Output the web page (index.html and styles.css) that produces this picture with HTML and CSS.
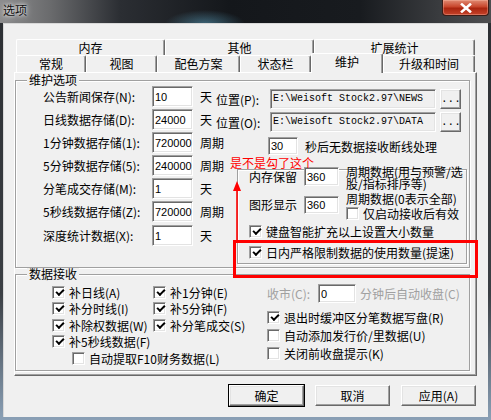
FILE: index.html
```html
<!DOCTYPE html>
<html lang="zh-CN">
<head>
  <meta charset="UTF-8" />
  <title>选项</title>
  <link rel="stylesheet" href="styles.css">
</head>
<body>
  <div class="window">
    <div class="titlebar">
      <span class="title">选项</span>
      <button class="close-btn" aria-label="关闭">
        <svg width="16" height="10" viewBox="0 0 16 10"><path d="M4 1.5 L12 8.5 M12 1.5 L4 8.5" stroke="#fff" stroke-width="2.6" stroke-linecap="square"/></svg>
      </button>
    </div>

    <div class="client">
      <div class="tabs">
        <div class="tab-row back">
          <div class="tab">内存</div>
          <div class="tab">其他</div>
          <div class="tab">扩展统计</div>
        </div>
        <div class="tab-row front">
          <div class="tab">常规</div>
          <div class="tab">视图</div>
          <div class="tab">配色方案</div>
          <div class="tab">状态栏</div>
          <div class="tab active">维护</div>
          <div class="tab">升级和时间</div>
        </div>
      </div>

      <div class="panel">
        <fieldset class="group maint">
          <legend>维护选项</legend>
          <div class="maint-body">
            <div class="left-col">
              <div class="field"><label>公告新闻保存(N):</label><input class="num" value="10"><span class="unit">天</span></div>
              <div class="field"><label>日线数据存储(D):</label><input class="num" value="24000"><span class="unit">天</span></div>
              <div class="field"><label>1分钟数据存储(1):</label><input class="num" value="720000"><span class="unit">周期</span></div>
              <div class="field"><label>5分钟数据存储(5):</label><input class="num" value="240000"><span class="unit">周期</span></div>
              <div class="field"><label>分笔成交存储(M):</label><input class="num" value="1"><span class="unit">天</span></div>
              <div class="field"><label>5秒线数据存储(Z):</label><input class="num" value="720000"><span class="unit">周期</span></div>
              <div class="field last"><label>深度统计数据(X):</label><input class="num" value="1"><span class="unit">天</span></div>
            </div>
            <div class="right-col">
              <div class="path-row"><span class="path-label">位置(P):</span><div class="path">E:\Weisoft Stock2.97\NEWS</div><button class="btn dots">...</button></div>
              <div class="path-row"><span class="path-label">位置(O):</span><div class="path">E:\Weisoft Stock2.97\DATA</div><button class="btn dots">...</button></div>
              <div class="timeout-row"><input class="num short" value="30"><span>秒后无数据接收断线处理</span></div>
              <div class="mem-box">
                <div class="mem-row first">
                  <span class="mem-label">内存保留</span><input class="num mem" value="360">
                  <span class="mem-desc">周期数据(用与预警/选<br>股/指标排序等)</span>
                </div>
                <div class="mem-row second">
                  <span class="mem-label">图形显示</span><input class="num mem" value="360">
                  <div class="mem-desc">
                    <div>周期数据(0表示全部)</div>
                    <div class="check sub"><span class="cb"></span>仅启动接收后有效</div>
                  </div>
                </div>
                <div class="check wide"><span class="cb on"></span>键盘智能扩充以上设置大小数量</div>
                <div class="check wide limit"><span class="cb on"></span>日内严格限制数据的使用数量(提速)</div>
              </div>
            </div>
          </div>
        </fieldset>

        <fieldset class="group recv">
          <legend>数据接收</legend>
          <div class="recv-body">
            <div class="recv-grid">
              <div class="check"><span class="cb on"></span>补日线(A)</div>
              <div class="check"><span class="cb on"></span>补1分钟(E)</div>
              <div class="check"><span class="cb on"></span>补分时线(I)</div>
              <div class="check"><span class="cb on"></span>补5分钟(F)</div>
              <div class="check"><span class="cb on"></span>补除权数据(W)</div>
              <div class="check"><span class="cb on"></span>补分笔成交(S)</div>
              <div class="check span"><span class="cb on"></span>补5秒线数据(F)</div>
              <div class="check span indent"><span class="cb"></span>自动提取F10财务数据(L)</div>
            </div>
            <div class="recv-right">
              <div class="close-row"><span class="muted close-label">收市(C):</span><input class="num close-in" value="0"><span class="muted">分钟后自动收盘(C)</span></div>
              <div class="check tall"><span class="cb on"></span>退出时缓冲区分笔数据写盘(R)</div>
              <div class="check tall"><span class="cb"></span>自动添加发行价/里数据(U)</div>
              <div class="check tall"><span class="cb"></span>关闭前收盘提示(K)</div>
            </div>
          </div>
        </fieldset>

        <span class="note">是不是勾了这个</span>
        <svg class="arrow" width="10" height="60" viewBox="0 0 10 60">
          <polygon points="5,0 1,10 9,10" fill="#f00"/>
          <line x1="5" y1="9" x2="5" y2="60" stroke="#f00" stroke-width="1.6"/>
        </svg>
        <div class="mark"></div>
      </div>

      <div class="buttons">
        <button class="btn action default">确定</button>
        <button class="btn action">取消</button>
        <button class="btn action">应用(A)</button>
      </div>
    </div>
  </div>
</body>
</html>
```

FILE: styles.css
```css
* {
  box-sizing: border-box;
}
html, body {
  margin: 0;
  padding: 0;
}
body {
  width: 491px;
  height: 420px;
  overflow: hidden;
  font-family: "Noto Sans CJK SC", "Noto Sans", sans-serif;
  font-size: 12px;
  color: #000;
  background: #1d2024;
}
.window {
  width: 491px;
  height: 420px;
  display: flex;
  flex-direction: column;
  background: linear-gradient(180deg, #2b2e32 0, #3b3f44 70%, #8aa0b6 100%);
}

/* title bar */
.titlebar {
  height: 23px;
  flex: none;
  display: flex;
  align-items: flex-start;
  background:
    radial-gradient(ellipse 40px 14px at 205px 24px, rgba(90, 160, 190, 0.55), transparent),
    linear-gradient(90deg, #8d8d8e 0, #6a6b6d 50px, #2b2e33 120px, #14171b 230px, #181b1f 360px, #3a3c3f 440px, #4d4e50 491px);
}
.title {
  padding-left: 3px;
  line-height: 19px;
  font-size: 12px;
  color: #111;
  text-shadow: 0 0 6px rgba(255, 255, 255, 0.9), 0 0 3px rgba(255, 255, 255, 0.8);
}
.close-btn {
  margin-left: auto;
  margin-right: 2px;
  width: 47px;
  height: 16px;
  padding: 0;
  border: 1px solid #3b1c16;
  border-top: none;
  border-radius: 0 0 4px 4px;
  background: linear-gradient(180deg, #e08a72 0, #c8462c 45%, #a9250f 55%, #c5432a 100%);
  box-shadow: inset 0 0 0 1px rgba(255, 200, 180, 0.35);
  display: flex;
  align-items: center;
  justify-content: center;
}
.close-btn svg {
  display: block;
}

/* client area */
.client {
  flex: 1;
  margin: 0 3px 3px;
  background: #f0f0f0;
  padding: 16px 0 0 11px;
  box-shadow: inset 1px 1px 0 #d8d8d8;
}

/* tabs */
.tabs {
  margin-left: 2px;
  width: 459px;
}
.tab-row {
  display: flex;
}
.tab-row.back {
  height: 16px;
}
.tab-row.front {
  height: 17px;
}
.tab {
  text-align: center;
  border-top: 1px solid #fff;
  border-left: 1px solid #fff;
  border-right: 1px solid #696969;
  box-shadow: inset -1px 0 0 #a0a0a0;
  background: #f0f0f0;
  border-radius: 2px 2px 0 0;
}
.back .tab {
  line-height: 15px;
}
.front .tab {
  line-height: 16px;
}
.back .tab:nth-child(1) { width: 149px; }
.back .tab:nth-child(2) { width: 149px; }
.back .tab:nth-child(3) { width: 161px; }
.front .tab:nth-child(1) { width: 70px; }
.front .tab:nth-child(2) { width: 71px; }
.front .tab:nth-child(3) { width: 83px; }
.front .tab:nth-child(4) { width: 71px; }
.front .tab:nth-child(5) { width: 72px; }
.front .tab:nth-child(6) { width: 92px; }
.front .tab.active {
  position: relative;
  z-index: 2;
  height: 20px;
  margin-top: -2px;
  line-height: 16px;
}

/* panel */
.panel {
  position: relative;
  width: 463px;
  height: 304px;
  border: 1px solid;
  border-color: #fff #696969 #696969 #fff;
  box-shadow: inset -1px -1px 0 #a0a0a0;
}

.group {
  margin: 0;
  padding: 0;
  min-width: 0;
  border: 1px solid #a0a0a0;
  box-shadow: inset 1px 1px 0 #fff, 1px 1px 0 #fff;
}
.group legend {
  margin-left: 11px;
  padding: 0 2px;
  line-height: 12px;
  background: #f0f0f0;
}
.maint {
  width: 455px;
  margin-top: 1px;
}
.maint-body {
  display: flex;
  padding: 0 0 3px 27px;
}
.left-col {
  flex: none;
  width: 173px;
}
.field {
  display: flex;
  align-items: center;
  height: 21px;
  margin-bottom: 2px;
  white-space: nowrap;
}
.field > * {
  flex: none;
}
.field.last {
  margin-top: 3px;
}
.field label {
  width: 109px;
}
.unit {
  margin-left: 7px;
}

.num {
  width: 41px;
  height: 21px;
  padding: 0 0 0 2px;
  font-family: "Liberation Sans", sans-serif;
  font-size: 11px;
  color: #000;
  background: #fff;
  border: 1px solid;
  border-color: #a0a0a0 #fff #fff #a0a0a0;
  box-shadow: inset 1px 1px 0 #696969, inset -1px -1px 0 #e3e3e3;
  outline: none;
}

.right-col {
  flex: 1;
}
.path-row {
  display: flex;
  align-items: center;
  height: 20px;
  margin-top: 3px;
}
.path-label {
  width: 54px;
}
.path {
  width: 166px;
  height: 20px;
  padding-left: 2px;
  font-family: "Liberation Mono", monospace;
  font-size: 10px;
  line-height: 18px;
  white-space: nowrap;
  border: 1px solid;
  border-color: #a0a0a0 #fff #fff #a0a0a0;
  box-shadow: inset 1px 1px 0 #696969, inset -1px -1px 0 #e3e3e3;
}
.btn {
  padding: 0;
  font-family: inherit;
  font-size: 12px;
  color: #000;
  background: #f0f0f0;
  border: 1px solid;
  border-color: #fff #696969 #696969 #fff;
  box-shadow: inset -1px -1px 0 #a0a0a0, inset 1px 1px 0 #e3e3e3;
}
.dots {
  width: 21px;
  height: 20px;
  margin-left: 4px;
  font-family: "Liberation Mono", monospace;
  font-size: 11px;
  line-height: 18px;
}
.timeout-row {
  display: flex;
  align-items: center;
  margin-top: 5px;
  padding-left: 52px;
}
.num.short {
  width: 30px;
  height: 18px;
}
.timeout-row span {
  margin-left: 7px;
}

.mem-box {
  width: 230px;
  height: 95px;
  margin: 14px 0 0 21px;
  padding: 0 0 0 11px;
  border: 1px solid #a0a0a0;
  box-shadow: inset 1px 1px 0 #fff, 1px 1px 0 #fff;
}
.mem-row {
  display: flex;
  align-items: flex-start;
}
.mem-row.first {
  margin-top: -3px;
}
.mem-row.second {
  margin-top: 6px;
}
.mem-label {
  width: 55px;
  line-height: 19px;
}
.num.mem {
  width: 35px;
  height: 19px;
}
.second .mem-label {
  line-height: 18px;
}
.second .num.mem {
  height: 18px;
}
.mem-desc {
  margin-left: 7px;
  margin-top: -1px;
  line-height: 12px;
  white-space: nowrap;
}
.second .mem-desc {
  margin-top: -3px;
}

.check {
  display: flex;
  align-items: center;
  white-space: nowrap;
}
.cb {
  position: relative;
  flex: none;
  width: 13px;
  height: 13px;
  margin-right: 4px;
  background: #fff;
  border: 1px solid;
  border-color: #a0a0a0 #fff #fff #a0a0a0;
  box-shadow: inset 1px 1px 0 #696969, inset -1px -1px 0 #e3e3e3;
}
.cb.on::after {
  content: "";
  position: absolute;
  left: 3px;
  top: 2px;
  width: 6px;
  height: 3px;
  border-left: 2px solid #000;
  border-bottom: 2px solid #000;
  transform: rotate(-45deg);
}
.check.sub {
  margin-top: 2px;
  height: 13px;
}
.check.wide {
  height: 14px;
  margin-top: 4px;
}
.check.wide.limit {
  margin-top: 7px;
}

/* data receiving */
.recv {
  width: 455px;
  height: 103px;
}
.recv-body {
  display: flex;
  padding: 4px 0 0 36px;
}
.recv-grid {
  flex: none;
  width: 215px;
  display: grid;
  grid-template-columns: 101px auto;
  grid-auto-rows: 16.5px;
}
.recv-grid .span {
  grid-column: 1 / 3;
}
.recv-grid .indent {
  padding-left: 20px;
}
.recv-right {
  flex: 1;
}
.close-row {
  display: flex;
  align-items: center;
  height: 19px;
  white-space: nowrap;
}
.muted {
  color: #a0a0a0;
}
.close-label {
  width: 51px;
}
.num.close-in {
  width: 38px;
  height: 19px;
  margin-right: 4px;
}
.check.tall {
  height: 18px;
}
.close-row + .check.tall {
  margin-top: 5px;
}

/* annotation drawn over the screenshot */
.note {
  position: absolute;
  left: 215px;
  top: 84px;
  line-height: 12px;
  color: #f00;
  white-space: nowrap;
}
.arrow {
  position: absolute;
  left: 217px;
  top: 108px;
}
.mark {
  position: absolute;
  left: 218px;
  top: 167px;
  width: 245px;
  height: 38px;
  border: 3px solid #f00;
}

/* dialog buttons */
.buttons {
  width: 463px;
  display: flex;
  justify-content: flex-end;
  gap: 11px;
  margin-top: 9px;
  padding-right: 1px;
}
.action {
  width: 75px;
  height: 21px;
}
.action.default {
  outline: 1px solid #000;
  outline-offset: 0;
}
```
